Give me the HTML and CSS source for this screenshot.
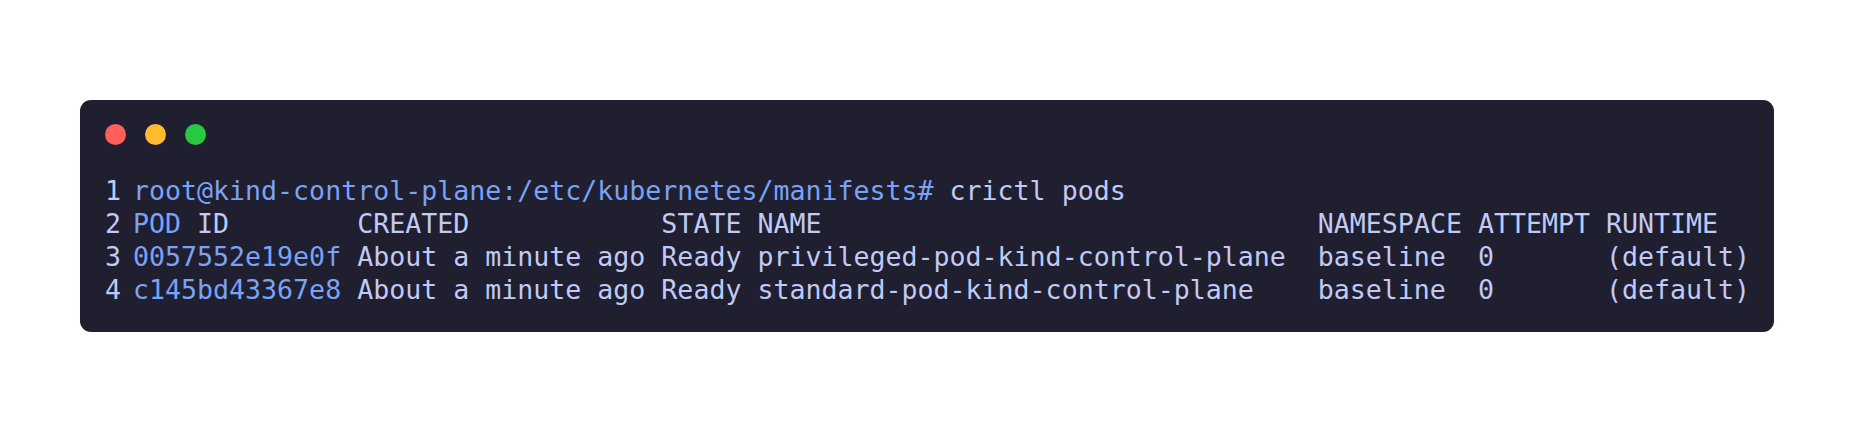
FILE: index.html
```html
<!DOCTYPE html>
<html>
<head>
<meta charset="utf-8">
<link rel="stylesheet" href="styles.css">
</head>
<body>
<div class="page">
  <div class="terminal">
    <div class="dots">
      <span class="dot red"></span>
      <span class="dot yellow"></span>
      <span class="dot green"></span>
    </div>
    <div class="code">
      <div class="line"><span class="ln">1</span><span class="txt"><span class="hl">root@kind-control-plane:/etc/kubernetes/manifests#</span> crictl pods</span></div>
      <div class="line"><span class="ln">2</span><span class="txt"><span class="hl">POD</span> ID        CREATED            STATE NAME                               NAMESPACE ATTEMPT RUNTIME</span></div>
      <div class="line"><span class="ln">3</span><span class="txt"><span class="hl">0057552e19e0f</span> About a minute ago Ready privileged-pod-kind-control-plane  baseline  0       (default)</span></div>
      <div class="line"><span class="ln">4</span><span class="txt"><span class="hl">c145bd43367e8</span> About a minute ago Ready standard-pod-kind-control-plane    baseline  0       (default)</span></div>
    </div>
  </div>
</div>
</body>
</html>
```

FILE: styles.css
```css
html, body {
  margin: 0;
  padding: 0;
  background: #ffffff;
}
.page {
  padding: 100px 80px;
}
.terminal {
  background: #1f1f2f;
  border-radius: 11px;
  padding: 24px 24px 26px 25px;
  height: 232px;
  box-sizing: border-box;
}
.dots {
  display: flex;
  gap: 19px;
  height: 21px;
}
.dot {
  width: 21px;
  height: 21px;
  border-radius: 50%;
}
.red { background: #ff5f57; }
.yellow { background: #febc2e; }
.green { background: #28c840; }
.code {
  margin-top: 29px;
  font-family: "DejaVu Sans Mono", monospace;
  font-size: 26.6px;
  line-height: 33px;
  color: #c0caf5;
}
.line {
  display: flex;
  white-space: pre;
}
.ln {
  color: #c0caf5;
  width: 16px;
  margin-right: 12px;
  text-align: right;
}
.hl {
  color: #7aa2f7;
}
```
